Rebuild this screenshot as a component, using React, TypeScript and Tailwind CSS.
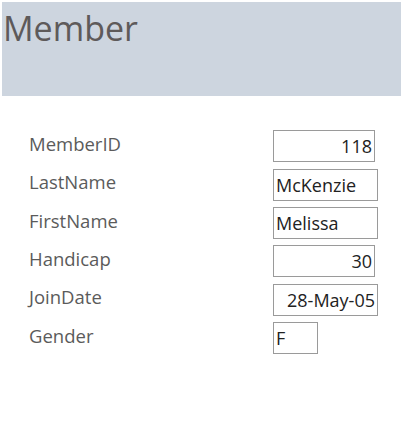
const fields = [
  { label: "MemberID", value: "118", width: "w-[102px]", align: "text-right" },
  { label: "LastName", value: "McKenzie", width: "w-[105px]", align: "text-left" },
  { label: "FirstName", value: "Melissa", width: "w-[105px]", align: "text-left" },
  { label: "Handicap", value: "30", width: "w-[102px]", align: "text-right" },
  { label: "JoinDate", value: "28-May-05", width: "w-[105px]", align: "text-right" },
  { label: "Gender", value: "F", width: "w-[45px]", align: "text-left" },
];

export default function App() {
  return (
    <div className="w-[403px] h-[433px] bg-white font-['Open_Sans',sans-serif]">
      <div className="pt-[2px] px-[2px]">
        <div className="h-[94px] bg-[#cdd5df] pl-px pt-[4px]">
          <h1 className="text-[34px] leading-[44px] text-[#5e5a5a]">Member</h1>
        </div>
      </div>
      <div className="pt-[31px] pl-[29px] flex flex-col">
        {fields.map((f) => (
          <div key={f.label} className="h-[38.4px] flex items-center">
            <span className="w-[244px] text-[18.5px] text-[#5b5b5b] -mt-[5px]">{f.label}</span>
            <div
              className={`${f.width} h-[32px] border border-[#9a9a9a] px-[2px] text-[18px] font-medium leading-[30px] text-[#222] ${f.align}`}
            >
              {f.value}
            </div>
          </div>
        ))}
      </div>
    </div>
  );
}
